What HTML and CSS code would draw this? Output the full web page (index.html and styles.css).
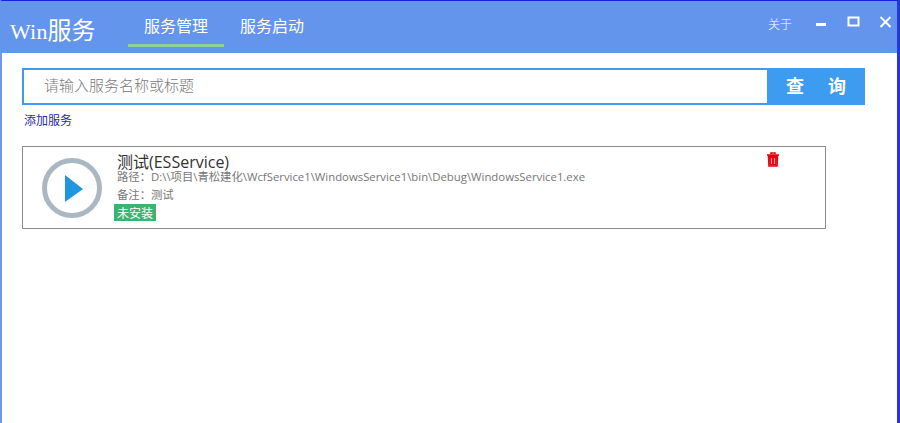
FILE: index.html
```html
<!DOCTYPE html>
<html lang="zh-CN">
<head>
<meta charset="utf-8">
<title>Win服务</title>
<link rel="stylesheet" href="styles.css">
</head>
<body>
<div class="window">
  <header class="header">
    <div class="logo"><span class="logo-latin">Win</span>服务</div>
    <nav class="tabs">
      <a class="tab active">服务管理</a>
      <a class="tab">服务启动</a>
    </nav>
    <div class="controls">
      <span class="about">关于</span>
      <svg class="ctl" width="12" height="12" viewBox="0 0 12 12"><rect x="1" y="7" width="10" height="3" fill="#fff"/></svg>
      <svg class="ctl" width="13" height="12" viewBox="0 0 13 12"><rect x="1.5" y="1.5" width="10" height="8" fill="none" stroke="#fff" stroke-width="2"/></svg>
      <svg class="ctl" width="13" height="12" viewBox="0 0 13 12"><path d="M1.5 1 L11.5 11 M11.5 1 L1.5 11" stroke="#fff" stroke-width="2" fill="none"/></svg>
    </div>
  </header>
  <main class="content">
    <div class="search">
      <div class="search-input">请输入服务名称或标题</div>
      <button class="search-btn">查<span class="btn-gap"></span>询</button>
    </div>
    <a class="add-link">添加服务</a>
    <section class="card">
      <svg class="play" width="62" height="62" viewBox="0 0 62 62">
        <circle cx="32" cy="31" r="27.5" fill="none" stroke="#a9b8c3" stroke-width="5"/>
        <path d="M25 18 L43 32 L25 45 Z" fill="#1e96e0"/>
      </svg>
      <div class="info">
        <div class="name">测试(ESService)</div>
        <div class="line">路径：D:\\项目\青松建化\WcfService1\WindowsService1\bin\Debug\WindowsService1.exe</div>
        <div class="line note">备注：测试</div>
        <span class="badge">未安装</span>
      </div>
      <svg class="trash" width="14" height="15" viewBox="0 0 14 15">
        <path d="M5 2 V1 H9 V2 M1 3 H13 M2.5 4 H11.5 L11 14 H3 Z" fill="none" stroke="#e8000d" stroke-width="1.6"/>
        <path d="M3 4 H11 L10.6 13.5 H3.4 Z" fill="#e8000d"/>
        <path d="M5.5 6 V12 M8.5 6 V12" stroke="#f3a0a5" stroke-width="1.2"/>
      </svg>
    </section>
  </main>
</div>
</body>
</html>
```
FILE: styles.css
```css
* { box-sizing: border-box; }
html, body { margin: 0; height: 100%; }
body {
  font-family: "Open Sans", "Noto Sans CJK SC", sans-serif;
  background: #fff;
}
.window {
  height: 423px;
  display: flex;
  flex-direction: column;
  border-top: 1px solid #1a22d8;
  border-left: 2px solid #6f97ee;
  border-right: 3px solid #2438e0;
  background: #fff;
}
.header {
  height: 52px;
  background: #6495ed;
  display: flex;
  align-items: flex-start;
  margin-left: -2px;
  padding-left: 10px;
  color: #fff;
  flex: none;
}
.logo {
  width: 118px;
  margin-top: 11px;
  font-size: 24px;
  line-height: 34px;
  font-family: "Noto Sans CJK SC", sans-serif;
  font-weight: 400;
  white-space: nowrap;
}
.logo-latin {
  font-family: "Liberation Serif", serif;
  font-weight: 400;
  font-size: 22px;
  letter-spacing: 0.2px;
}
.tabs { display: flex; margin-top: 1px; }
.tab {
  width: 96px;
  height: 45px;
  text-align: center;
  font-size: 16px;
  line-height: 46px;
  font-family: "Noto Sans CJK SC", sans-serif;
  font-weight: 400;
  white-space: nowrap;
}
.tab.active { border-bottom: 3px solid #8fd19e; }
.controls {
  margin-left: auto;
  margin-top: 14px;
  display: flex;
  align-items: flex-start;
  padding-right: 5px;
}
.about {
  font-size: 12px;
  line-height: 17px;
  margin-right: 23px;
  font-family: "Noto Sans CJK SC", sans-serif;
  font-weight: 300;
}
.ctl { margin-right: 20px; margin-top: 1px; }
.ctl:nth-of-type(2) { margin-right: 19px; }
.ctl:last-child { margin-right: 0; }
.content { padding: 15px 0 0 20px; flex: 1; }
.search { display: flex; width: 843px; height: 37px; }
.search-input {
  flex: 1;
  border: 2px solid #3d9bf0;
  border-right: none;
  padding-left: 20px;
  font-size: 15px;
  line-height: 30px;
  color: #7a7a7a;
  font-family: "Noto Sans CJK SC", sans-serif;
  font-weight: 300;
}
.search-btn {
  width: 98px;
  border: none;
  background: #3d9bf0;
  color: #fff;
  font-size: 18px;
  font-weight: 700;
  line-height: 32px;
  font-family: "Noto Sans CJK SC", sans-serif;
  padding: 0 0 3px;
  display: flex;
  justify-content: center;
  align-items: center;
}
.btn-gap { width: 24px; }
.add-link {
  display: block;
  margin: 6px 0 0 2px;
  font-size: 12px;
  line-height: 18px;
  color: #2a2aa8;
  font-family: "Noto Sans CJK SC", sans-serif;
}
.card {
  margin-top: 17px;
  width: 804px;
  height: 83px;
  border: 1px solid #8c8c8c;
  display: flex;
  align-items: flex-start;
  position: relative;
}
.play { margin: 10px 0 0 17px; flex: none; }
.info { margin-left: 14px; padding-top: 8px; }
.name {
  font-size: 16px;
  line-height: 15px;
  color: #333;
  padding-left: 1px;
}
.line {
  font-size: 11.35px;
  line-height: 13px;
  color: #777;
  padding-left: 1px;
  white-space: nowrap;
}
.line.note { margin-top: 4px; height: 15px; line-height: 15px; }
.badge {
  display: block;
  width: 42px;
  height: 17px;
  margin-top: 2px;
  margin-left: -2px;
  background: #3cb371;
  color: #fff;
  font-size: 12px;
  line-height: 17px;
  text-align: center;
  font-family: "Noto Sans CJK SC", sans-serif;
}
.trash { position: absolute; left: 743px; top: 5px; }
```
